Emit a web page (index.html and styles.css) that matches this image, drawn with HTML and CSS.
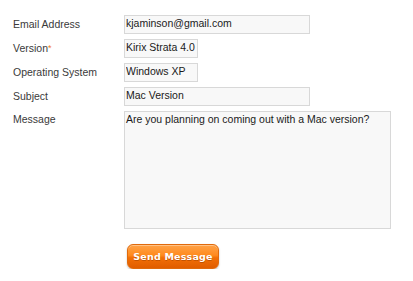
FILE: index.html
```html
<!DOCTYPE html>
<html lang="en">

<head>
    <meta charset="UTF-8" />
    <meta name="viewport" content="width=device-width, initial-scale=1.0" />
    <title>Contact Form</title>
    <link rel="stylesheet" href="styles.css">
</head>

<body>
    <form class="contact-form">
        <div class="form-row">
            <label for="email">Email Address</label>
            <input type="text" id="email" class="field wide" value="kjaminson@gmail.com" />
        </div>
        <div class="form-row">
            <label for="version">Version<span class="required">*</span></label>
            <input type="text" id="version" class="field short" value="Kirix Strata 4.0" />
        </div>
        <div class="form-row">
            <label for="os">Operating System</label>
            <input type="text" id="os" class="field short" value="Windows XP" />
        </div>
        <div class="form-row">
            <label for="subject">Subject</label>
            <input type="text" id="subject" class="field wide" value="Mac Version" />
        </div>
        <div class="form-row top">
            <label for="message">Message</label>
            <textarea id="message" class="field message">Are you planning on coming out with a Mac version?</textarea>
        </div>
        <div class="form-actions">
            <button type="button" class="send-btn">Send Message</button>
        </div>
    </form>
</body>

</html>
```

FILE: styles.css
```css
body {
    margin: 0;
    background-color: #ffffff;
    font-family: "Liberation Sans", Arial, sans-serif;
    font-size: 10.5px;
    color: #333333;
}

.contact-form {
    display: flex;
    flex-direction: column;
    gap: 5px;
    padding: 15px 0 0 13px;
}

.form-row {
    display: flex;
    align-items: center;
}

.form-row.top {
    align-items: flex-start;
}

.form-row label {
    width: 111px;
    line-height: 13px;
    color: #3a3a3a;
}

.form-row.top label {
    padding-top: 2px;
}

.required {
    color: #f27a1a;
    font-size: 9px;
    vertical-align: top;
}

.field {
    box-sizing: border-box;
    margin: 0;
    border: 1px solid #d8d8d8;
    background-color: #f8f8f8;
    font-family: "Liberation Sans", Arial, sans-serif;
    font-size: 10.5px;
    color: #1a1a1a;
    outline: none;
}

input.field {
    height: 19px;
    padding: 0 1px 3px;
}

.wide {
    width: 186px;
}

.short {
    width: 74px;
}

.message {
    width: 267px;
    height: 118px;
    padding: 1px 1px;
    resize: none;
    line-height: 13px;
}

.form-actions {
    padding: 10px 0 0 114px;
}

.send-btn {
    width: 92px;
    height: 25px;
    padding: 0;
    border: 1px solid #e06a0c;
    border-radius: 6px;
    background: linear-gradient(to bottom, #ffa247 0%, #ff8a1e 45%, #f26f06 55%, #e05d00 100%);
    box-shadow: 0 1px 2px rgba(0, 0, 0, 0.25), inset 0 1px 0 rgba(255, 255, 255, 0.35);
    color: #ffffff;
    font-family: "DejaVu Sans", Verdana, sans-serif;
    font-size: 9.5px;
    font-weight: bold;
    letter-spacing: 0.2px;
    text-shadow: 0 1px 0 rgba(150, 60, 0, 0.5);
    cursor: pointer;
}
```
